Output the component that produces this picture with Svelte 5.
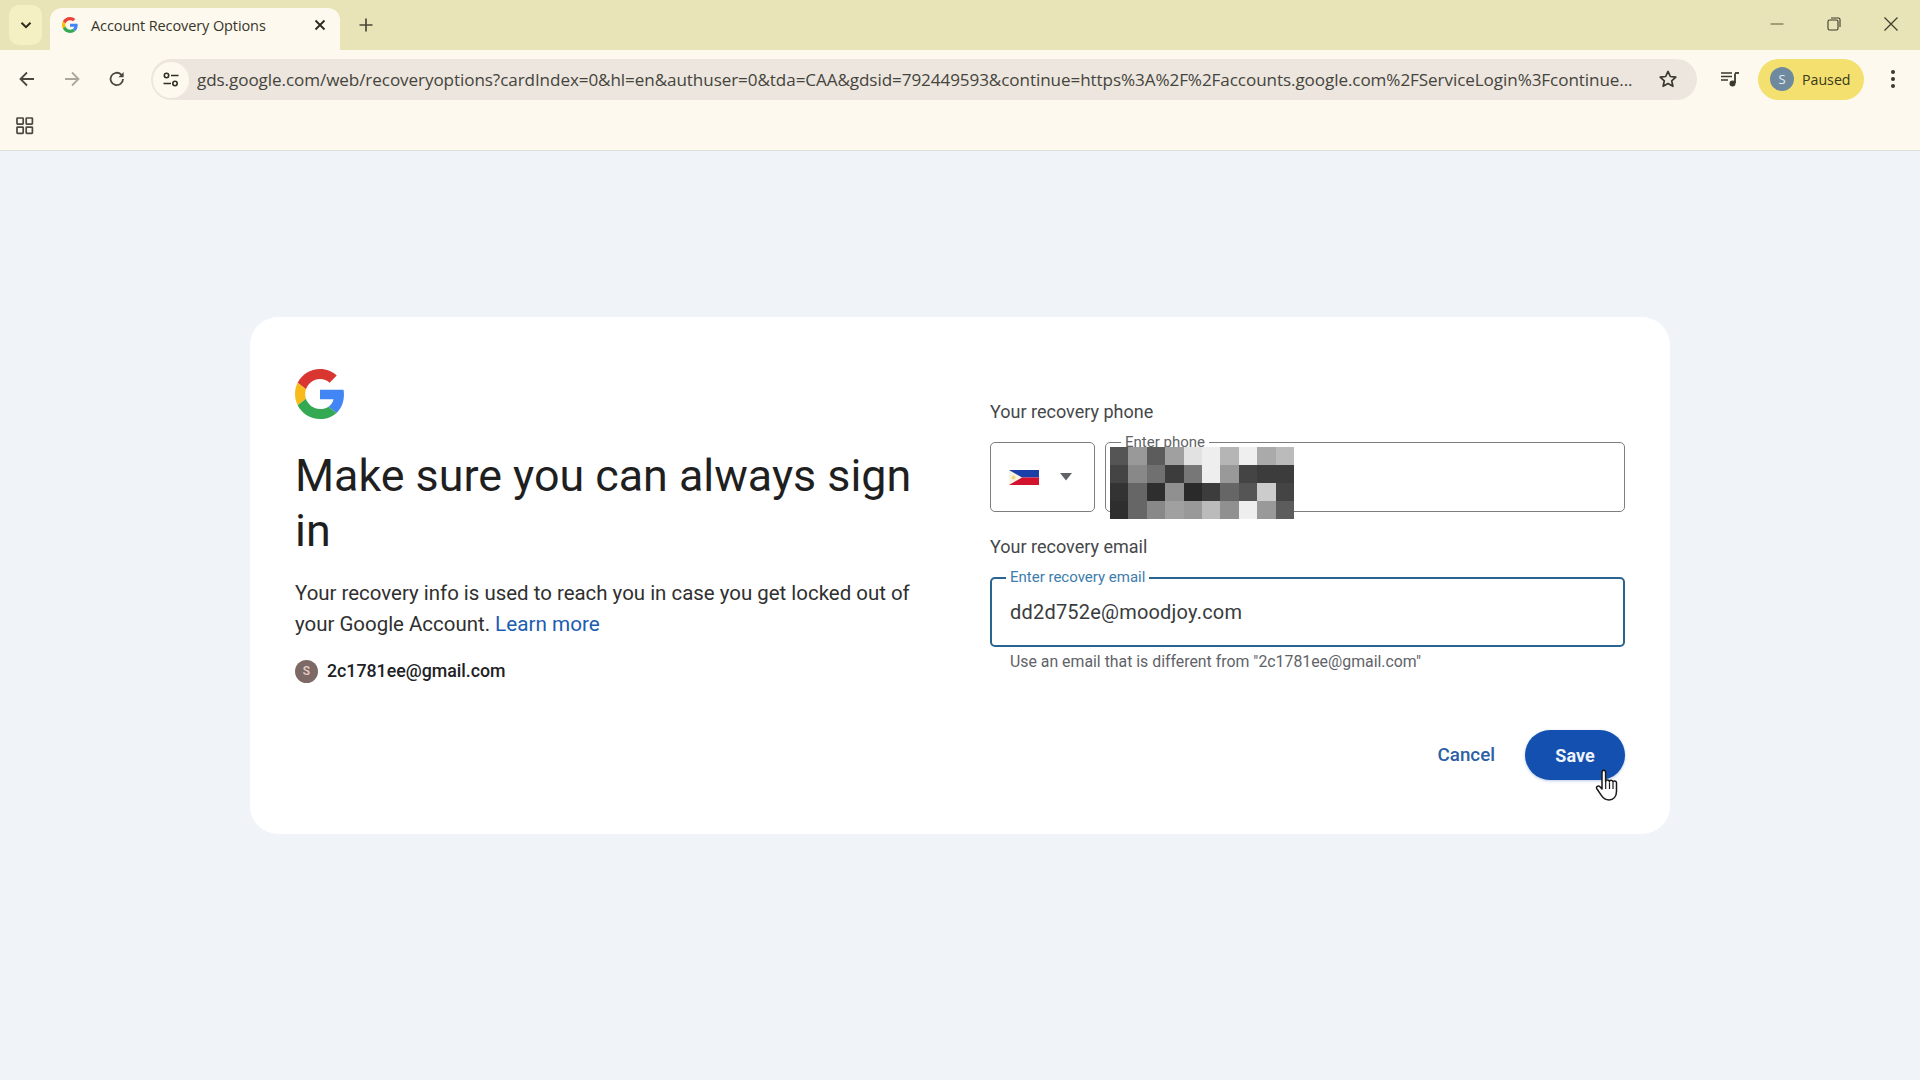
<script>
  const mosaic = [
    '#555','#999','#5c5c5c','#a0a0a0','#e2e2e2','#eee','#b5b5b5','#efefef','#aaa','#bbb',
    '#444','#888','#707070','#3c3c3c','#777','#eee','#999','#444','#3c3c3c','#3c3c3c',
    '#333','#666','#2e2e2e','#909090','#2a2a2a','#3c3c3c','#666','#555','#ccc','#444',
    '#2e2e2e','#666','#888','#a0a0a0','#999','#bbb','#909090','#eee','#999','#5c5c5c'
  ];
</script>

<div class="window">
  <div class="strip">
    <div class="tabsearch">
      <svg width="14" height="14" viewBox="0 0 14 14"><path d="M2.5 4.8 7 9.2l4.5-4.4" fill="none" stroke="#2b2a1c" stroke-width="2"/></svg>
    </div>
    <div class="tab">
      <svg class="favicon" width="16" height="16" viewBox="0 0 48 48">
        <path fill="#EA4335" d="M24 9.5c3.54 0 6.71 1.22 9.21 3.6l6.85-6.85C35.9 2.38 30.47 0 24 0 14.62 0 6.51 5.38 2.56 13.22l7.98 6.19C12.43 13.72 17.74 9.5 24 9.5z"/>
        <path fill="#4285F4" d="M46.98 24.55c0-1.57-.15-3.09-.38-4.55H24v9.02h12.94c-.58 2.96-2.26 5.48-4.78 7.18l7.73 6c4.51-4.18 7.09-10.36 7.09-17.65z"/>
        <path fill="#FBBC05" d="M10.53 28.59c-.48-1.45-.76-2.99-.76-4.59s.27-3.14.76-4.59l-7.98-6.19C.92 16.46 0 20.12 0 24c0 3.88.92 7.54 2.56 10.78l7.97-6.19z"/>
        <path fill="#34A853" d="M24 48c6.48 0 11.93-2.13 15.89-5.81l-7.73-6c-2.15 1.45-4.92 2.3-8.16 2.3-6.26 0-11.57-4.22-13.47-9.91l-7.98 6.19C6.51 42.62 14.62 48 24 48z"/>
      </svg>
      <span class="tabtitle">Account Recovery Options</span>
      <svg class="tabclose" width="12" height="12" viewBox="0 0 12 12"><path d="M1.500 1.500l9 9m0-9l-9 9" stroke="#2b2a1c" stroke-width="1.800" fill="none"/></svg>
    </div>
    <svg class="newtab" width="14" height="14" viewBox="0 0 14 14"><path d="M7 0.500v13M0.500 7h13" stroke="#4a4836" stroke-width="1.700" fill="none"/></svg>
    <div class="winbtns">
      <svg width="16" height="16" viewBox="0 0 16 16"><path d="M1.500 8h13" stroke="#7d785c" stroke-width="1.300"/></svg>
      <svg width="16" height="16" viewBox="0 0 16 16"><rect x="2" y="4" width="10" height="10" rx="1.500" fill="none" stroke="#3d3b2c" stroke-width="1.100"/><path d="M5 2h7.500a1.500 1.500 0 0 1 1.500 1.500V11" fill="none" stroke="#3d3b2c" stroke-width="1.100"/></svg>
      <svg width="16" height="16" viewBox="0 0 16 16"><path d="M1.500 1.500l13 13m0-13l-13 13" stroke="#3d3b2c" stroke-width="1.200" fill="none"/></svg>
    </div>
  </div>

  <div class="toolbar">
    <div class="navs">
      <svg width="20" height="20" viewBox="0 0 20 20"><path d="M17 10H4M10 3.500 3.500 10l6.500 6.500" fill="none" stroke="#4a4840" stroke-width="1.800"/></svg>
      <svg width="20" height="20" viewBox="0 0 20 20"><path d="M3 10h13M10 3.500l6.500 6.500-6.500 6.500" fill="none" stroke="#aaa89c" stroke-width="1.800"/></svg>
      <svg width="20" height="20" viewBox="0 0 20 20"><path d="M16 10a6.200 6.200 0 1 1-1.900-4.500L16 7.200" fill="none" stroke="#4a4840" stroke-width="1.800"/><path d="M16.600 3v5.200h-5.200z" fill="#4a4840"/></svg>
    </div>
    <div class="omnibox">
      <div class="siteinfo">
        <svg width="18" height="18" viewBox="0 0 18 18"><circle cx="4.500" cy="4.500" r="2.200" fill="none" stroke="#2f2e24" stroke-width="1.600"/><path d="M9 4.500h7.500M1.500 12.500H9" stroke="#2f2e24" stroke-width="1.700"/><circle cx="13" cy="12.500" r="2.200" fill="none" stroke="#2f2e24" stroke-width="1.600"/></svg>
      </div>
      <span class="url">gds.google.com/web/recoveryoptions?cardIndex=0&amp;hl=en&amp;authuser=0&amp;tda=CAA&amp;gdsid=792449593&amp;continue=https%3A%2F%2Faccounts.google.com%2FServiceLogin%3Fcontinue...</span>
      <svg class="star" width="20" height="20" viewBox="0 0 20 20"><path d="M10 2.400l2.300 5.100 5.500.6-4.100 3.700 1.200 5.500L10 14.600l-4.900 2.700 1.200-5.500-4.100-3.700 5.500-.6z" fill="none" stroke="#3a392e" stroke-width="1.700" stroke-linejoin="round"/></svg>
    </div>
    <svg class="media" width="20" height="20" viewBox="0 0 20 20"><path d="M1 4h11M1 7.500h11M1 11h7" stroke="#3a392e" stroke-width="1.700"/><path d="M15 4.500V14" stroke="#3a392e" stroke-width="1.800"/><path d="M15 4h4" stroke="#3a392e" stroke-width="1.800"/><circle cx="12.500" cy="14.500" r="3" fill="#3a392e"/></svg>
    <div class="paused">
      <span class="avatar">S</span>
      <span>Paused</span>
    </div>
    <svg class="kebab" width="6" height="20" viewBox="0 0 6 20"><circle cx="3" cy="3" r="2" fill="#3a392e"/><circle cx="3" cy="10" r="2" fill="#3a392e"/><circle cx="3" cy="17" r="2" fill="#3a392e"/></svg>
  </div>

  <div class="bookmarks">
    <svg width="18" height="18" viewBox="0 0 18 18"><g fill="none" stroke="#4a4840" stroke-width="1.700"><rect x="1" y="1" width="6.200" height="6.200" rx=".6"/><rect x="10.200" y="1" width="6.200" height="6.200" rx=".6"/><rect x="1" y="10.200" width="6.200" height="6.200" rx=".6"/><rect x="10.200" y="10.200" width="6.200" height="6.200" rx=".6"/></g></svg>
  </div>

  <main class="page">
    <section class="card">
      <div class="left">
        <svg class="glogo" width="50" height="50" viewBox="0 0 48 48">
          <path fill="#D93632" d="M24 9.500c3.540 0 6.710 1.220 9.210 3.600l6.850-6.850C35.900 2.380 30.470 0 24 0 14.620 0 6.510 5.380 2.560 13.220l7.980 6.190C12.430 13.720 17.740 9.500 24 9.500z"/>
          <path fill="#4285F4" d="M46.980 24.550c0-1.570-.15-3.090-.38-4.550H24v9.020h12.940c-.58 2.960-2.260 5.480-4.780 7.180l7.730 6c4.510-4.180 7.090-10.360 7.090-17.650z"/>
          <path fill="#F7BC1C" d="M10.530 28.590c-.48-1.450-.76-2.990-.76-4.590s.27-3.140.76-4.590l-7.980-6.190C.92 16.460 0 20.120 0 24c0 3.880.92 7.540 2.560 10.780l7.970-6.190z"/>
          <path fill="#34A853" d="M24 48c6.480 0 11.930-2.130 15.890-5.810l-7.730-6c-2.150 1.450-4.920 2.300-8.160 2.300-6.260 0-11.570-4.220-13.470-9.910l-7.980 6.190C6.510 42.620 14.620 48 24 48z"/>
        </svg>
        <h1>Make sure you can always sign in</h1>
        <p class="desc">Your recovery info is used to reach you in case you get locked out of your Google Account. <span class="link">Learn more</span></p>
        <div class="account">
          <span class="acct-avatar">S</span>
          <span>2c1781ee@gmail.com</span>
        </div>
      </div>

      <div class="right">
        <div class="section-label">Your recovery phone</div>
        <div class="phone-row">
          <div class="country">
            <svg width="30" height="15" viewBox="0 0 30 15">
              <rect width="30" height="7.500" fill="#1a3fa8"/><rect y="7.500" width="30" height="7.500" fill="#d3122e"/>
              <path d="M0 0l13 7.500L0 15z" fill="#f7f3e4"/><circle cx="4.500" cy="7.500" r="2" fill="#ecd97a"/>
            </svg>
            <svg width="14" height="8" viewBox="0 0 14 8"><path d="M1 0h12L7 7.500z" fill="#5f6368"/></svg>
          </div>
          <div class="phone-field">
            <span class="float-label">Enter phone</span>
            <div class="mosaic">
              {#each mosaic as c}
                <i style="background:{c}"></i>
              {/each}
            </div>
          </div>
        </div>

        <div class="section-label second">Your recovery email</div>
        <div class="email-field">
          <span class="float-label active">Enter recovery email</span>
          <span class="value">dd2d752e@moodjoy.com</span>
        </div>
        <div class="hint">Use an email that is different from "2c1781ee@gmail.com"</div>

        <div class="actions">
          <span class="cancel">Cancel</span>
          <span class="save">Save</span>
          <svg class="hand" width="26" height="34" viewBox="0 0 26 34">
            <path d="M7 3.500c0-3 3.600-3 3.600 0v9.200c.3-2.300 3.600-2.300 3.800 0 .3-2 3.400-2 3.600.3.500-1.700 3.400-1.400 3.500.7v8.800c0 5-3 8.500-7.500 8.500-3.500 0-5.500-1.300-7.500-4.300L2 20c-1.500-2.500 1.300-4 3-2.300l2 2.300z" fill="#fff" stroke="#1a1a1a" stroke-width="1.500" stroke-linejoin="round"/>
            <path d="M10.700 13v7M14.500 13.500v6.500M18 13.500v6.500" stroke="#1a1a1a" stroke-width="1.200" fill="none"/>
          </svg>
        </div>
      </div>
    </section>
  </main>
</div>

<style>
  :global(body) { margin: 0; background: #f0f4f8; }
  .window { width: 1920px; height: 1080px; overflow: hidden; display: flex; flex-direction: column; font-family: "Roboto", "Liberation Sans", sans-serif; }

  .strip { height: 50px; background: #e9e3b8; display: flex; align-items: flex-end; padding-left: 9px; box-sizing: border-box; }
  .tabsearch { width: 33px; height: 40px; margin-bottom: 5px; background: #f5f0c4; border-radius: 10px; display: flex; align-items: center; justify-content: center; }
  .tab { width: 290px; height: 42px; margin-left: 8px; background: #fef9ee; border-radius: 12px 12px 0 0; display: flex; align-items: center; padding: 0 12px 8px 13px; box-sizing: border-box; }
  .favicon { margin-right: 13px; margin-left: -1px; }
  .tabtitle { flex: 1; font: 14.500px "Open Sans", sans-serif; color: #36352a; letter-spacing: -0.1px; }
  .tabclose { margin-right: 2px; }
  .newtab { margin: 0 0 18px 19px; }
  .winbtns { margin-left: auto; height: 50px; display: flex; align-items: center; gap: 41px; padding: 0 21px 2px 0; box-sizing: border-box; }

  .toolbar { height: 50px; background: #fef9ee; display: flex; align-items: center; position: relative; padding-left: 17px; box-sizing: border-box; }
  .navs { display: flex; gap: 25px; align-items: center; margin-top: 8px; }
  .omnibox { margin-left: 24px; width: 1546px; height: 41px; border-radius: 21px; background: #ece6df; display: flex; align-items: center; box-sizing: border-box; position: relative; padding-left: 46px; margin-top: 8px; }
  .siteinfo { position: absolute; left: 2px; top: 3px; width: 36px; height: 36px; border-radius: 50%; background: #fef9ee; display: flex; align-items: center; justify-content: center; }
  .url { font: 17.080px "Open Sans", sans-serif; color: #45443c; white-space: nowrap; flex: 1; min-width: 0; overflow: hidden; letter-spacing: -0.08px; }
  .star { flex: none; margin: 0 19px 0 16px; }
  .media { margin: 8px 0 0 23px; }
  .paused { margin: 8px 0 0 18px; width: 106px; height: 41px; border-radius: 21px; background: #f3e06f; display: flex; align-items: center; box-sizing: border-box; padding-left: 12px; gap: 8px; font: 14.200px "Open Sans", sans-serif; color: #3c3a1c; }
  .avatar { width: 24px; height: 24px; border-radius: 50%; background: #6f8a9f; color: #e8eef2; display: flex; align-items: center; justify-content: center; font-size: 13px; }
  .kebab { margin: 8px 0 0 26px; }

  .bookmarks { height: 51px; background: #fef9ee; border-bottom: 1px solid #dcdcd8; box-sizing: border-box; padding: 17px 0 0 16px; }
  .bookmarks svg { display: block; }

  .page { flex: 1; background: #f0f4f8; padding: 166px 0 0 250px; }
  .card { width: 1420px; height: 517px; background: #fff; border-radius: 28px; box-sizing: border-box; padding: 52px 45px 0; display: flex; }
  .left { width: 695px; }
  .glogo { display: block; margin-bottom: 29px; }
  h1 { margin: 0; width: 640px; font: 400 44.800px/55px "Roboto", sans-serif; color: #1f1f1f; }
  .desc { margin: 19.500px 0 0; width: 630px; font-size: 20.450px; line-height: 31px; color: #303030; }
  .link { color: #1a5cb0; font-size: 20.700px; }
  .account { margin-top: 20px; display: flex; align-items: center; gap: 9px; font-size: 17.750px; font-weight: 500; color: #202124; }
  .acct-avatar { width: 23px; height: 23px; border-radius: 50%; background: #7d6a66; color: #e8cfc9; font-size: 12px; display: flex; align-items: center; justify-content: center; }

  .right { width: 635px; padding-top: 33px; }
  .section-label { font-size: 18px; line-height: 22px; color: #45474a; margin-top: -1px; }
  .section-label.second { margin-top: 24px; }
  .phone-row { margin-top: 19px; display: flex; gap: 10px; }
  .country { width: 105px; height: 70px; border: 1px solid #7b7d80; border-radius: 5px; box-sizing: border-box; display: flex; align-items: center; justify-content: center; gap: 20px; padding-right: 4px; }
  .phone-field { flex: 1; height: 70px; border: 1px solid #7b7d80; border-radius: 5px; box-sizing: border-box; position: relative; }
  .float-label { position: absolute; left: 15px; top: -9px; background: #fff; padding: 0 4px; font-size: 15px; line-height: 16px; color: #5f6368; }
  .mosaic { position: absolute; left: 4px; top: 4px; width: 184px; height: 72px; display: grid; grid-template-columns: repeat(10, 1fr); grid-template-rows: repeat(4, 1fr); }
  .email-field { margin-top: 19px; height: 70px; border: 2px solid #2a6490; border-radius: 5px; box-sizing: border-box; position: relative; display: flex; align-items: center; padding-left: 18px; }
  .email-field .float-label { left: 14px; top: -10px; }
  .float-label.active { color: #3d7cac; }
  .value { font-size: 20px; color: #3a3b3d; letter-spacing: 0.2px; }
  .hint { margin: 6px 0 0 20px; font-size: 15.850px; line-height: 18px; color: #5f6368; }
  .actions { margin-top: 59px; display: flex; justify-content: flex-end; align-items: center; position: relative; }
  .cancel { font-size: 18.800px; font-weight: 500; color: #2d5fa6; margin-right: 30px; }
  .save { width: 100px; height: 50px; border-radius: 25px; background: #1450b0; color: #eef3fb; display: flex; align-items: center; justify-content: center; font-size: 18px; font-weight: 700; box-shadow: 0 1px 3px rgba(20,80,176,.3); }
  .hand { position: absolute; right: 4px; top: 39px; }
</style>
